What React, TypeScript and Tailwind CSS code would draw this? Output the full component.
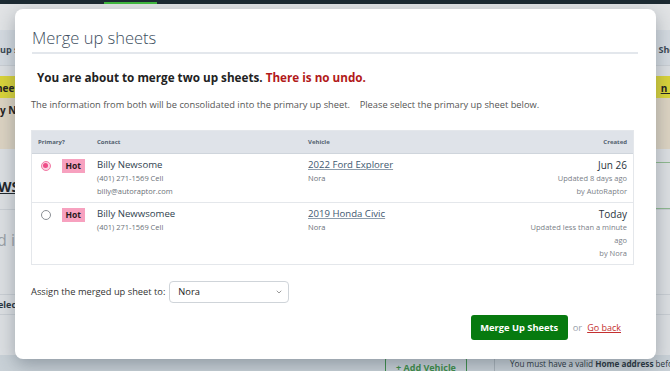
import { ChevronDown } from "lucide-react";

const rows = [
  {
    name: "Billy Newsome",
    phone: "(401) 271-1569 Cell",
    email: "billy@autoraptor.com",
    vehicle: "2022 Ford Explorer",
    owner: "Nora",
    created: "Jun 26",
    updated: "Updated 8 days ago",
    by: "by AutoRaptor",
    selected: true,
  },
  {
    name: "Billy Newwsomee",
    phone: "(401) 271-1569 Cell",
    email: "",
    vehicle: "2019 Honda Civic",
    owner: "Nora",
    created: "Today",
    updated: "Updated less than a minute ago",
    by: "by Nora",
    selected: false,
  },
];

const Backdrop = () => (
  <div className="flex h-[371px] w-full flex-col overflow-hidden bg-[#dcdfe2] text-[9px] font-bold text-[#2b3640]">
    <div className="h-[4px] w-full bg-[#1c2a32]">
      <div className="ml-[104px] mt-[2px] h-[2px] w-[53px] bg-[#3fb93f]" />
    </div>
    <div className="h-[26px] bg-[#e1e3e5]" />
    <div className="flex h-[36px] items-end justify-between border-b border-[#c9ced3] bg-[#d4dae0] pb-[8px] text-[#3a4855]">
      <span>up s</span>
      <span className="-mr-[10px]">Shee</span>
    </div>
    <div className="h-[10px]" />
    <div className="flex h-[22px] items-end justify-between bg-[#d9d33a] pb-[2px] text-[10px] text-[#222]">
      <span className="-ml-[4px]">heet</span>
      <span className="-mr-[8px] underline">n N</span>
    </div>
    <div className="flex h-[52px] items-start justify-between bg-[#dcd3c2] pt-[5px] text-[10px] text-[#222]">
      <span>y N</span>
    </div>
    <div className="flex h-[14px] justify-end">
      <div className="w-[14px] border-b border-[#8fb98f]" />
    </div>
    <div className="flex h-[47px] items-end justify-between border-b border-[#c9ced3]">
      <span className="-ml-[2px] mb-[12px] text-[14px] text-[#1f262c] underline">WS</span>
      <div className="h-full w-[14px] border-b border-[#8fb98f]" />
    </div>
    <div className="flex h-[42px] items-end">
      <span className="-ml-[3px] text-[16px] font-normal text-[#9aa1a7]">d in</span>
    </div>
    <div className="h-[44px] border-b border-[#c9ced3]" />
    <div className="flex h-[20px] items-center border-b border-[#c9ced3]">
      <span className="-ml-[2px]">elec</span>
    </div>
    <div className="flex h-[40px] justify-end pt-[1px]">
      <span className="-mr-[6px]">k</span>
    </div>
    <div className="flex flex-1 items-start whitespace-nowrap bg-[#c9d1d7] pl-[385px] text-[9px]">
      <div className="mt-[2px] h-[14px] rounded-t-[3px] border border-b-0 border-[#3f8f4a] px-[10px] pt-[3px] text-[#3f8f4a]">
        + Add Vehicle
      </div>
      <div className="ml-[27px] h-full border-l border-[#aab3ba]" />
      <div className="ml-[15px] pt-[3px] text-[8.2px] font-normal text-[#2b3640]">
        You must have a valid <b>Home address</b> before
      </div>
    </div>
  </div>
);

const Modal = () => (
  <div className="absolute left-[15px] top-[9px] flex h-[350px] w-[641px] flex-col rounded-[8px] bg-white pl-[16px] pr-[18px] pt-[17px] shadow-[0_6px_18px_rgba(40,55,70,0.35)]">
    <h1 className="ml-[1px] border-b-2 border-[#e3e7ec] pb-[2px] text-[16.5px] font-light leading-[24px] text-[#3d4e5e]">
      Merge up sheets
    </h1>
    <p className="ml-[6px] mt-[14px] text-[11.7px] font-bold leading-[18px] text-[#222]">
      You are about to merge two up sheets. <span className="text-[#b21a1a]">There is no undo.</span>
    </p>
    <p className="mt-[12px] whitespace-pre text-[9.3px] leading-[14px] text-[#555]">
      {"The information from both will be consolidated into the primary up sheet.    Please select the primary up sheet below."}
    </p>
    <div className="mr-[4px] mt-[18px] border border-[#e4e7eb]">
      <div className="grid h-[23px] grid-cols-[59px_211px_1fr_112px] items-center border-b border-[#cfd5dc] bg-[#dfe3e9] text-[6px] font-bold text-[#52616f]">
        <div className="px-[6px]">Primary?</div>
        <div className="px-[6px]">Contact</div>
        <div className="px-[6px]">Vehicle</div>
        <div className="px-[6px] text-right">Created</div>
      </div>
      {rows.map((r, i) => (
        <div
          key={i}
          className={`grid grid-cols-[59px_211px_1fr_112px] pb-[4px] pt-[4px] ${i === 0 ? "border-b border-[#e4e7eb]" : ""}`}
        >
          <div className="flex items-start px-[6px] pt-[2px]">
            {r.selected ? (
              <div className="ml-[3px] mt-[0.5px] flex h-[10px] w-[10px] items-center justify-center rounded-full border border-[#f27aa5] bg-[#fbd3e2]">
                <div className="h-[5px] w-[5px] rounded-full bg-[#ee4c87]" />
              </div>
            ) : (
              <div className="ml-[3px] mt-[0.5px] h-[10px] w-[10px] rounded-full border border-[#8a8f94] bg-white" />
            )}
            <div className="-mt-[1px] ml-[11px] flex h-[14px] w-[25px] items-center justify-center bg-[#f7a1bf] text-[8.5px] font-bold text-[#2a1a20]">
              Hot
            </div>
          </div>
          <div className="px-[6px]">
            <div className="text-[9.6px] leading-[14px] text-[#2f3f4f]">{r.name}</div>
            <div className="text-[7.5px] leading-[13px] text-[#6b7178]">{r.phone}</div>
            {r.email && <div className="text-[7.5px] leading-[12px] text-[#6b7178]">{r.email}</div>}
          </div>
          <div className="px-[6px]">
            <div className="text-[9.6px] leading-[14px] text-[#3e5870] underline decoration-[#8d9dac]">{r.vehicle}</div>
            <div className="text-[7.5px] leading-[13px] text-[#6b7178]">{r.owner}</div>
          </div>
          <div className="px-[6px] text-right">
            <div className="text-[10px] leading-[14px] text-[#2a3540]">{r.created}</div>
            <div className="text-[7.5px] leading-[13px] text-[#7a8087]">{r.updated}</div>
            <div className="text-[7.5px] leading-[13px] text-[#7a8087]">{r.by}</div>
          </div>
        </div>
      ))}
    </div>
    <div className="mt-[16px] flex items-center text-[9.3px] text-[#333]">
      <span>Assign the merged up sheet to:</span>
      <div className="ml-[4px] flex h-[22px] w-[120px] items-center justify-between rounded-[4px] border border-[#cfd4d9] bg-white pl-[8px] pr-[5px] text-[#222]">
        <span>Nora</span>
        <ChevronDown className="h-[8px] w-[8px] text-[#666]" strokeWidth={2} />
      </div>
    </div>
    <div className="mr-[17px] mt-[12px] flex items-center justify-end text-[9.3px]">
      <button className="h-[25px] w-[97px] rounded-[3px] bg-[#077a0f] font-bold text-white">Merge Up Sheets</button>
      <span className="ml-[5px] text-[#9aa3ab]">or</span>
      <span className="ml-[5px] text-[9px] text-[#c43030] underline">Go back</span>
    </div>
  </div>
);

export default function App() {
  return (
    <div className="relative h-[371px] w-full overflow-hidden font-['Open_Sans',sans-serif]">
      <Backdrop />
      <Modal />
    </div>
  );
}
